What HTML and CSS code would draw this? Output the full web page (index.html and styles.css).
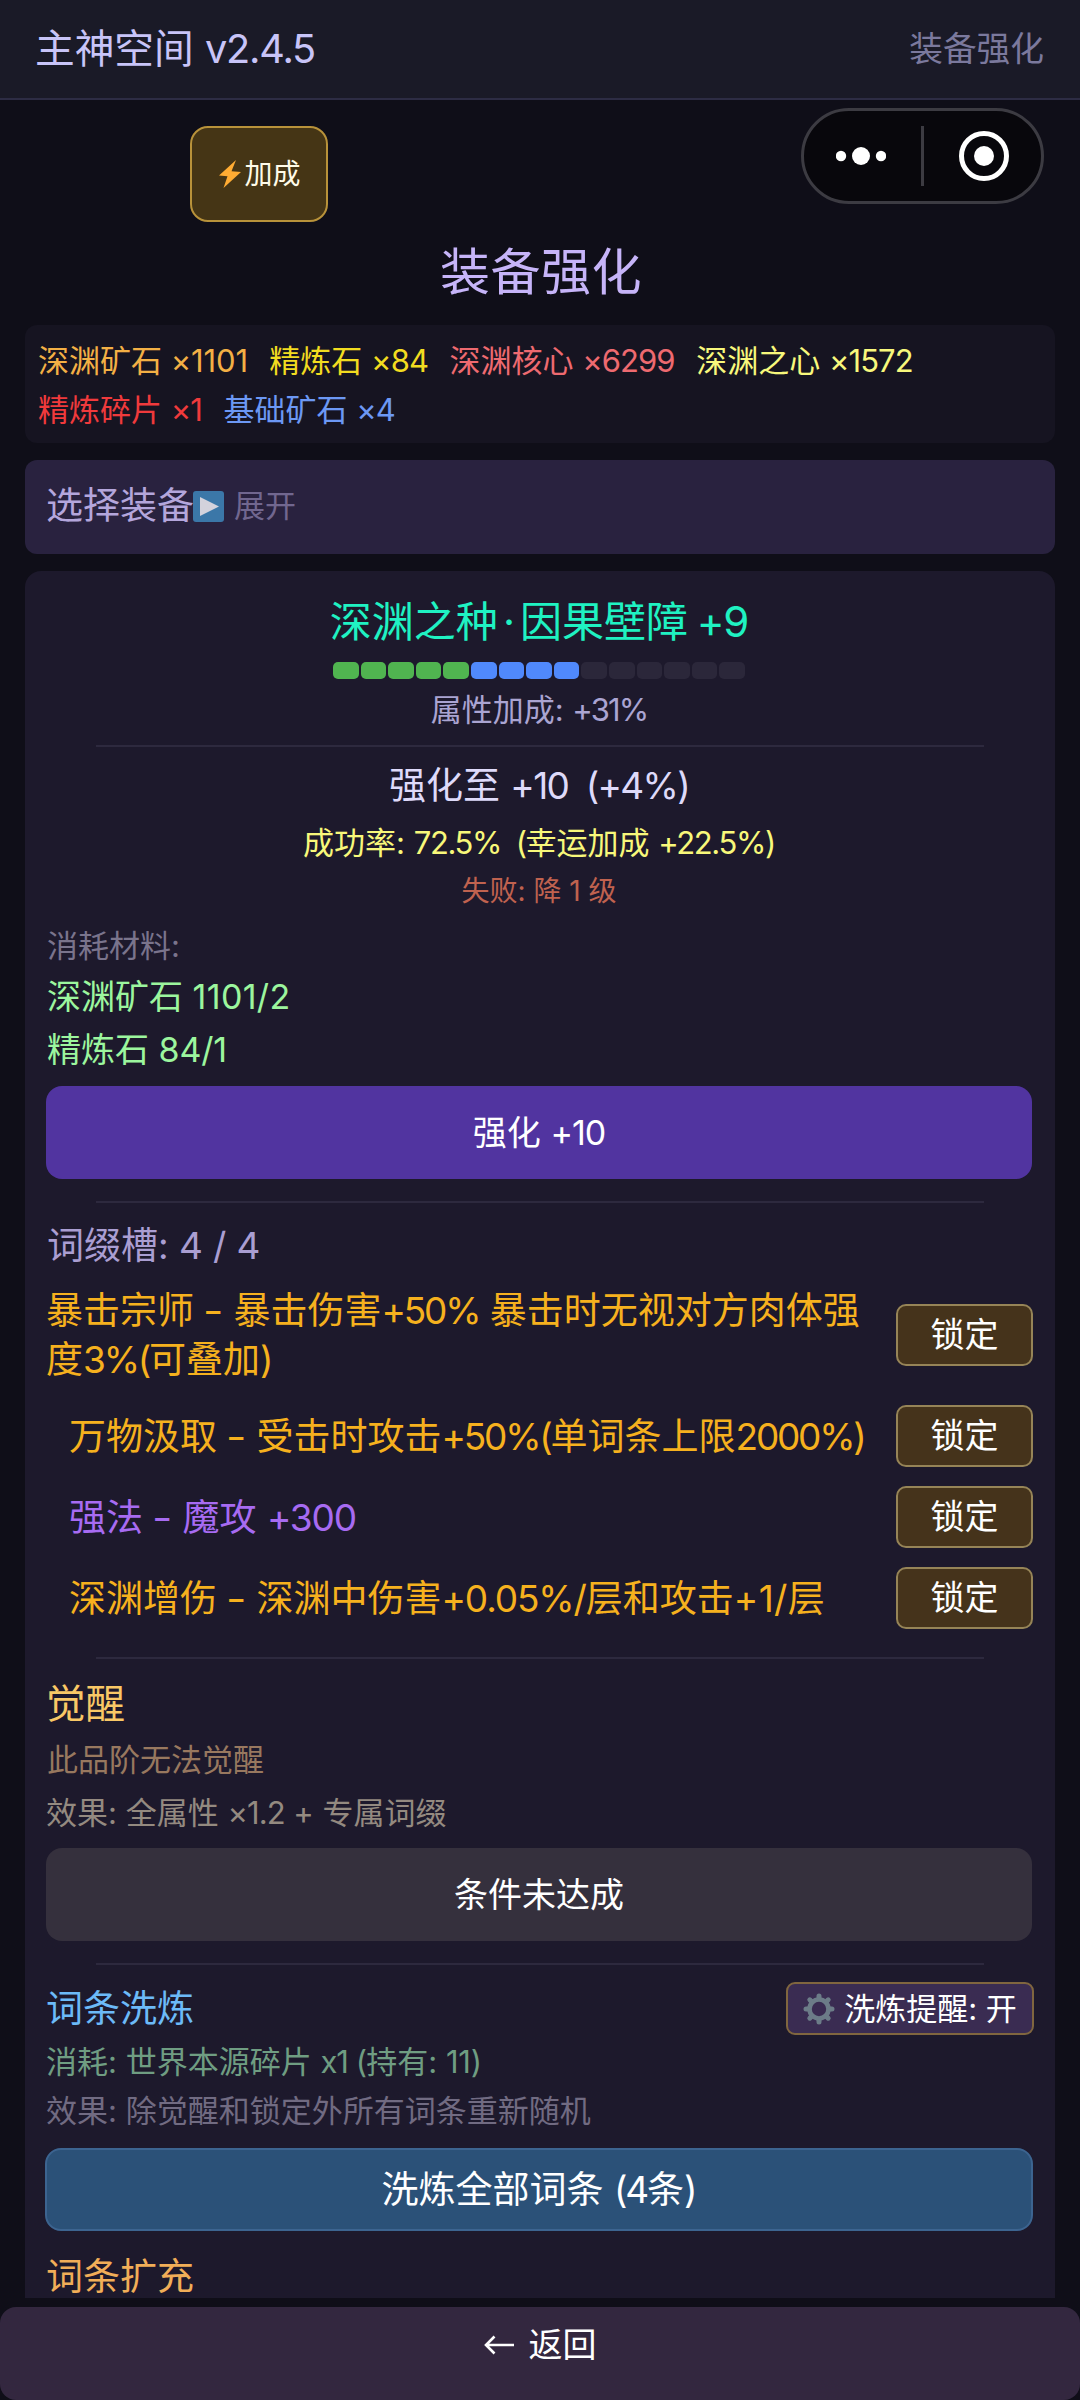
FILE: index.html
```html
<!DOCTYPE html>
<html lang="zh-CN">
<head>
<meta charset="utf-8">
<title>装备强化</title>
<link rel="stylesheet" href="styles.css">
</head>
<body>
<div class="app">
  <header class="topbar">
    <span class="app-name">主神空间 <span class="n">v2.4.5</span></span>
    <span class="page-name">装备强化</span>
  </header>

  <button class="boost">
    <svg class="bolt" viewBox="0 0 22 28"><path d="M17 0 0 15.5 8.500 16.200 4.500 28 22 12 12.500 11.200z" fill="#ffac33"/></svg>加成
  </button>
  <div class="capsule">
    <svg class="dots" viewBox="0 0 50 20"><circle cx="5" cy="10" r="5.200"/><circle cx="25" cy="10" r="9"/><circle cx="45" cy="10" r="5.200"/></svg>
    <span class="capsule-line"></span>
    <svg class="target" viewBox="0 0 50 50"><circle cx="25" cy="25" r="22.500" fill="none" stroke="#fff" stroke-width="5"/><circle cx="25" cy="25" r="10"/></svg>
  </div>

  <h1 class="title">装备强化</h1>

  <main class="content">
    <section class="materials">
      <span class="c-orange">深渊矿石 <span class="n wide">×1101</span></span>
      <span class="c-gold">精炼石 <span class="n">×84</span></span>
      <span class="c-rose">深渊核心 <span class="n">×6299</span></span>
      <span class="c-lemon">深渊之心 <span class="n">×1572</span></span>
      <span class="c-red">精炼碎片 <span class="n">×1</span></span>
      <span class="c-blue">基础矿石 <span class="n">×4</span></span>
    </section>

    <section class="picker">
      <span>选择装备</span>
      <svg class="play" viewBox="0 0 31 31"><rect width="31" height="31" rx="3" fill="#3b77a8"/><path d="M7 6v19l19-9.500z" fill="#d3d2dc"/></svg>
      <span class="picker-hint">展开</span>
    </section>

    <section class="card">
      <div class="item-name">深渊之种<span class="dot">·</span>因果壁障 <span class="n">+9</span></div>
      <div class="levels">
        <i class="on"></i><i class="on"></i><i class="on"></i><i class="on"></i><i class="on"></i>
        <i class="hi"></i><i class="hi"></i><i class="hi"></i><i class="hi"></i>
        <i></i><i></i><i></i><i></i><i></i><i></i>
      </div>
      <div class="bonus">属性加成: <span class="n tight">+31%</span></div>
      <hr>
      <div class="next">强化至 <span class="n snug">+10&nbsp; (+4%)</span></div>
      <div class="rate">成功率: <span class="n snug">72.5%&nbsp; (</span>幸运加成 <span class="n snug">+22.5%)</span></div>
      <div class="fail">失败: 降 1 级</div>
      <div class="cost-label">消耗材料:</div>
      <div class="cost">深渊矿石 <span class="n loose">1101/2</span></div>
      <div class="cost">精炼石 <span class="n wide">84/1</span></div>
      <button class="btn primary">强化 <span class="n">+10</span></button>
      <hr class="after-btn">

      <div class="slots">词缀槽: <span class="n wide">4 / 4</span></div>
      <div class="affix first">
        <p>暴击宗师 <span class="dash">-</span> 暴击伤害<span class="n tight">+50%</span> 暴击时无视对方肉体强<br>度<span class="n tight">3%(</span>可叠加<span class="n">)</span></p>
        <button class="lock">锁定</button>
      </div>
      <div class="affix indent second">
        <p>万物汲取 <span class="dash">-</span> 受击时攻击<span class="n tight">+50%(</span>单词条上限<span class="n tight">2000%)</span></p>
        <button class="lock">锁定</button>
      </div>
      <div class="affix indent epic">
        <p>强法 <span class="dash">-</span> 魔攻 <span class="n">+300</span></p>
        <button class="lock">锁定</button>
      </div>
      <div class="affix indent">
        <p>深渊增伤 <span class="dash">-</span> 深渊中伤害<span class="n">+0.05%/</span>层和攻击<span class="n loose">+1/</span>层</p>
        <button class="lock">锁定</button>
      </div>
      <hr class="after-affix">

      <div class="awaken">觉醒</div>
      <div class="awaken-note">此品阶无法觉醒</div>
      <div class="awaken-effect">效果: 全属性 <span class="n">×1.2</span> + 专属词缀</div>
      <button class="btn disabled">条件未达成</button>
      <hr class="after-btn">

      <div class="reroll-head">
        <span class="reroll-title">词条洗炼</span>
        <button class="reminder">
          <svg class="gear" viewBox="-16 -16 32 32">
            <circle r="9.500" fill="none" stroke="#6c7c88" stroke-width="4.600"/>
            <g stroke="#6c7c88" stroke-width="5" stroke-linecap="round">
              <path d="M0-11V-13M0 11V13M-11 0H-13M11 0H13M-7.800-7.800-9.200-9.200M7.800 7.800 9.200 9.200M-7.800 7.800-9.200 9.200M7.800-7.800 9.200-9.200"/>
            </g>
          </svg>洗炼提醒: 开
        </button>
      </div>
      <div class="reroll-cost">消耗: 世界本源碎片 <span class="n">x1 (</span>持有: <span class="n wide">11)</span></div>
      <div class="reroll-effect">效果: 除觉醒和锁定外所有词条重新随机</div>
      <button class="btn reroll">洗炼全部词条 <span class="n tight">(4</span>条<span class="n">)</span></button>
      <div class="expand">词条扩充</div>
    </section>
  </main>

  <footer class="back">
    <svg class="arrow" viewBox="0 0 31 20"><path d="M10.500 1.500 2 10l8.500 8.500M2 10h28" fill="none" stroke="#fff" stroke-width="2.600"/></svg>返回
  </footer>
</div>
</body>
</html>
```
FILE: styles.css
```css
* { box-sizing: border-box; }

body {
  margin: 0;
  background: #0f0e18;
  font-family: Inter, "Noto Sans CJK SC", sans-serif;
  font-size: 31px;
  color: #fff;
}

button {
  font: inherit;
  color: inherit;
  border: 0;
  padding: 0;
  margin: 0;
}

/* tracking of digits and Latin signs */
.n { letter-spacing: -.03em; }
.n.tight { letter-spacing: -.06em; }
.n.snug { letter-spacing: -.045em; }
.n.wide { letter-spacing: -.005em; }
.n.loose { letter-spacing: .01em; }

.app {
  position: relative;
  width: 1080px;
  height: 2400px;
  display: flex;
  flex-direction: column;
  overflow: hidden;
  white-space: nowrap;
}

/* top bar */
.topbar {
  height: 100px;
  padding: 0 36px 0 35px;
  display: flex;
  justify-content: space-between;
  align-items: center;
  background: #1a1a27;
  border-bottom: 2px solid #2d2c44;
}
.app-name { font-size: 39.700px; line-height: 60px; color: #c8c4f8; }
.page-name { font-size: 33.700px; line-height: 60px; color: #7b799d; }

/* floating controls */
.boost {
  position: absolute;
  left: 190px;
  top: 126px;
  width: 138px;
  height: 96px;
  display: flex;
  align-items: center;
  justify-content: center;
  gap: 3px;
  padding-left: 2px;
  font-size: 28px;
  line-height: 40px;
  color: #fffbe8;
  background: #453515;
  border: 2px solid #b8923a;
  border-radius: 18px;
}
.bolt { width: 22px; height: 28px; }

.capsule {
  position: absolute;
  left: 801px;
  top: 108px;
  width: 243px;
  height: 96px;
  display: flex;
  align-items: center;
  background: #08070c;
  border: 3px solid #3c3b42;
  border-radius: 48px;
  fill: #fff;
}
.dots { width: 50px; height: 20px; margin-left: 32px; }
.capsule-line { width: 3px; height: 60px; margin: 0 35px 0 35px; background: #3c3b42; }
.target { width: 50px; height: 50px; }

.title {
  margin: 139px 0 20px;
  height: 66px;
  padding-left: 2px;
  font-size: 50px;
  font-weight: 400;
  line-height: 66px;
  letter-spacing: .5px;
  text-align: center;
  color: #c6b4f8;
}

/* content column */
.content {
  flex: 1;
  min-height: 0;
  padding: 0 25px;
  display: flex;
  flex-direction: column;
  gap: 17px;
}

.materials {
  height: 118px;
  padding: 11px 13px;
  display: flex;
  flex-wrap: wrap;
  column-gap: 21.500px;
  line-height: 49px;
  background: #161421;
  border-radius: 12px;
}
.c-orange { color: #f3b045; }
.c-gold { color: #f2dc20; }
.c-rose { color: #ee6a70; }
.c-lemon { color: #f8f87c; }
.c-red { color: #f03a3c; }
.c-blue { color: #6c98f4; }

.picker {
  flex: none;
  height: 94px;
  padding: 0 21px 2px;
  display: flex;
  align-items: center;
  font-size: 37px;
  line-height: 48px;
  color: #b4a6dc;
  background: #29223f;
  border-radius: 12px;
}
.play { width: 31px; height: 31px; margin: 0 10px 0 -1px; }
.picker-hint { font-size: 31px; color: #71678f; }

.card {
  flex: 1;
  min-height: 0;
  overflow: hidden;
  padding: 25px 23px 0 21px;
  background: #1d192c;
  border-radius: 16px 16px 0 0;
}

hr {
  height: 2px;
  margin: 15px 48px 0 50px;
  border: 0;
  background: #2d293e;
}
hr.after-btn { margin-top: 22px; }
hr.after-affix { margin-top: 28px; }

.item-name, .bonus, .next, .rate, .fail { text-align: center; }
.item-name { font-size: 42px; line-height: 51px; word-spacing: -3px; color: #1ff2c2; }
.item-name .dot { padding: 0 5px; }

.levels {
  width: 412px;
  height: 17px;
  margin: 15px auto 0;
  display: flex;
  gap: 2px;
}
.levels i { flex: 1; border-radius: 5px; background: #2b273a; }
.levels .on { background: #50b450; }
.levels .hi { background: #5089fc; }

.bonus { margin-top: 11px; line-height: 40px; color: #aaa4d2; }
.next { margin-top: 15px; font-size: 37px; line-height: 48px; color: #dedafa; }
.rate { margin-top: 13px; line-height: 40px; color: #f8f87a; }
.fail { margin-top: 8px; font-size: 28px; line-height: 40px; color: #c0624f; }
.cost-label { margin-top: 15px; padding-left: 1px; line-height: 40px; color: #7a748c; }
.cost { margin-top: 9px; padding-left: 1px; font-size: 34px; line-height: 44px; color: #9cf69e; }

.btn {
  display: block;
  width: 100%;
  height: 93px;
  margin-top: 14px;
  font-size: 34px;
  line-height: 93px;
  text-align: center;
  border-radius: 16px;
}
.primary { background: #5134a0; }
.disabled { background: #35303d; }

.slots { margin-top: 19px; padding-left: 1px; font-size: 37px; line-height: 48px; color: #aa9ed2; }

/* affix rows */
.affix {
  height: 62px;
  margin: 19px -1px 0 0;
  display: flex;
  align-items: center;
  justify-content: space-between;
  font-size: 37px;
  line-height: 49px;
  color: #f6b11e;
}
.affix p { margin: 0; }
.affix.first { height: 98px; margin-top: 16px; }
.affix.second { margin-top: 21px; }
.affix.indent { padding-left: 23px; }
.affix.epic { color: #a76bf2; }
.dash {
  display: inline-block;
  width: .505em;
  text-align: center;
  transform: scaleX(1.2);
}
.lock {
  width: 137px;
  height: 62px;
  font-size: 34px;
  line-height: 56px;
  color: #fff;
  background: #45331b;
  border: 2px solid #968457;
  border-radius: 10px;
}

.awaken { margin-top: 21px; font-size: 39.500px; line-height: 49px; color: #f9c866; }
.awaken-note { margin-top: 11px; padding-left: 1px; line-height: 40px; color: #98785f; }
.awaken-effect { margin-top: 13px; line-height: 40px; color: #948a80; }
.btn.disabled { margin-top: 15px; }

/* reroll */
.reroll-head {
  height: 53px;
  margin: 17px -2px 0 0;
  display: flex;
  align-items: center;
  justify-content: space-between;
}
.reroll-title { font-size: 37px; line-height: 48px; color: #6cbaf8; }
.reminder {
  width: 248px;
  height: 53px;
  display: flex;
  align-items: center;
  justify-content: center;
  line-height: 40px;
  background: #3a2c52;
  border: 2px solid #80663f;
  border-radius: 9px;
}
.gear { width: 32px; height: 32px; margin-right: 9px; }
.reroll-cost { margin-top: 7px; line-height: 40px; color: #6f9d82; }
.reroll-effect { margin-top: 9px; line-height: 40px; color: #716b82; }
.btn.reroll {
  width: 988px;
  height: 83px;
  margin: 17px -1px 0;
  font-size: 37px;
  line-height: 79px;
  background: #2b5178;
  border: 2px solid #3c6490;
}
.expand { margin-top: 25px; font-size: 37px; line-height: 42px; color: #f1ae58; }

.back {
  height: 93px;
  margin-top: 9px;
  padding-bottom: 17px;
  display: flex;
  align-items: center;
  justify-content: center;
  gap: 14px;
  font-size: 34px;
  line-height: 44px;
  background: #33273f;
  border-radius: 16px;
}
.arrow { width: 31px; height: 20px; }
```
